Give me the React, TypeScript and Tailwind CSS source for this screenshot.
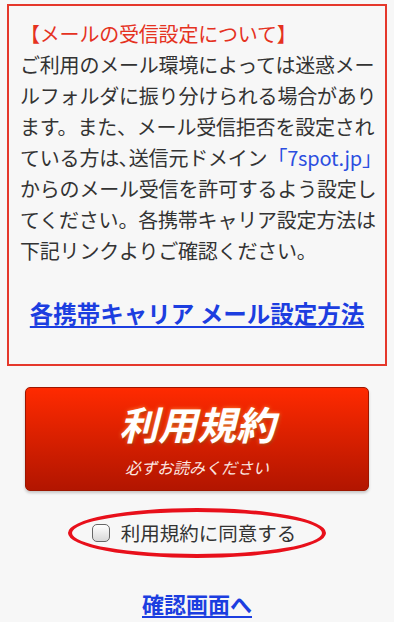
export default function App() {
  const font = { fontFamily: '"Noto Sans CJK JP", "Noto Sans", sans-serif' };
  return (
    <div className="min-h-[622px] w-[394px] overflow-hidden bg-[#f7f7f7] pt-[4px] text-[#333]" style={font}>
      <div className="mx-[7px] border-2 border-[#e5382b] px-[11px] pt-[12px] pb-[35px]">
        <div className="text-[20px] leading-[31px] whitespace-nowrap tracking-[-0.2px]">
          <p className="text-[#e5321f]">【メールの受信設定について】</p>
          <p>
            ご利用のメール環境によっては迷惑メー
            <br />
            ルフォルダに振り分けられる場合があり
            <br />
            ます。また、メール受信拒否を設定され
            <br />
            ている方は､送信元ドメイン
            <span className="text-[#2b4ee0]">「7spot.jp」</span>
            <br />
            からのメール受信を許可するよう設定し
            <br />
            てください。各携帯キャリア設定方法は
            <br />
            下記リンクよりご確認ください。
          </p>
        </div>
        <div className="mt-[32px] text-center">
          <a href="#" className="text-[23.5px] leading-[31px] font-bold text-[#1c3ee0] underline underline-offset-[3px] decoration-[2px]">
            各携帯キャリア メール設定方法
          </a>
        </div>
      </div>

      <div className="mx-[25px] mt-[21px] flex h-[104px] flex-col items-center rounded-[5px] border border-[#9c1600] bg-gradient-to-b from-[#ff2a00] to-[#b21500] pt-[10px] shadow-[0_2px_3px_rgba(0,0,0,0.2)]">
        <div className="text-[39px] leading-[50px] font-bold italic text-white [text-shadow:0_0_4px_rgba(255,150,60,0.9),1px_2px_2px_rgba(120,20,0,0.6)]">
          利用規約
        </div>
        <div className="mt-[7px] text-[16px] leading-[24px] italic text-[#fbe6e0]">必ずお読みください</div>
      </div>

      <div className="mt-[17px] flex justify-center">
        <label className="flex h-[50px] w-[258px] items-center justify-center gap-[11px] rounded-[50%] border-[4px] border-[#e8101b] pr-[6px]">
          <span className="h-[18px] w-[18px] rounded-[5px] border border-[#666] bg-gradient-to-b from-[#ffffff] to-[#d8d8d8]" />
          <span className="text-[19.5px] leading-[28px] text-[#333]">利用規約に同意する</span>
        </label>
      </div>

      <div className="mt-[30px] text-center">
        <a href="#" className="text-[22px] leading-[30px] font-bold text-[#1c3ee0] underline underline-offset-[3px] decoration-[2px]">
          確認画面へ
        </a>
      </div>
    </div>
  );
}
